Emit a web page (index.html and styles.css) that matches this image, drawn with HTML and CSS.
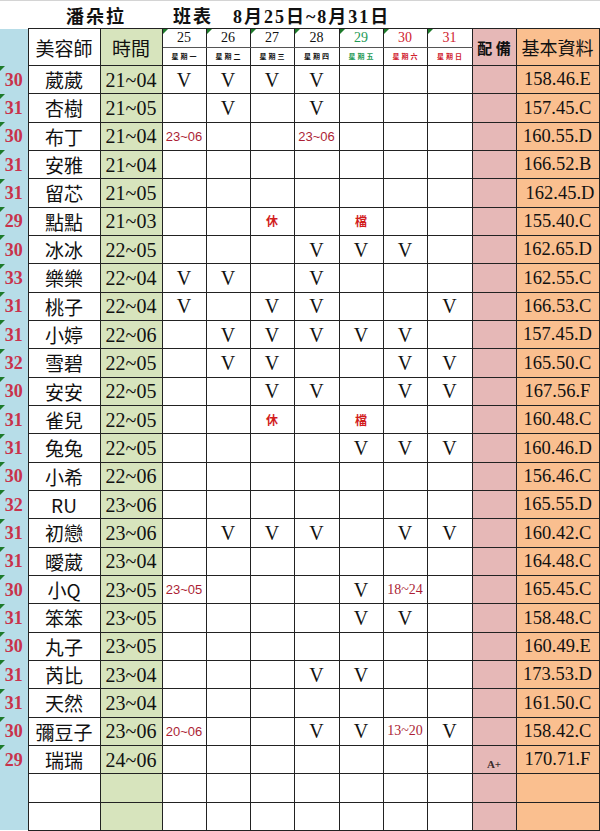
FILE: index.html
```html
<!DOCTYPE html>
<html lang="zh-Hant">
<head>
<meta charset="utf-8">
<title>潘朵拉 班表</title>
<link rel="stylesheet" href="styles.css">
</head>
<body>
<div class="title"><span class="t1">潘朵拉</span><span class="t2">班表</span><span class="t3">8月25日~8月31日</span></div>
<table class="sheet">
<colgroup>
<col class="w-num"><col class="w-name"><col class="w-time">
<col class="w-d44"><col class="w-d44"><col class="w-d44"><col class="w-d45"><col class="w-d44"><col class="w-d44"><col class="w-d45">
<col class="w-d44"><col class="w-info">
</colgroup>
<tr class="h1">
<th class="num" rowspan="2"></th>
<th class="name hd" rowspan="2">美容師</th>
<th class="time hd" rowspan="2">時間</th>
<th class="date mark">25</th><th class="date mark">26</th><th class="date mark">27</th><th class="date mark">28</th>
<th class="date mark green">29</th><th class="date mark red">30</th><th class="date mark red">31</th>
<th class="gear hdg" rowspan="2">配 備</th>
<th class="info hd" rowspan="2">基本資料</th>
</tr>
<tr class="h2">
<th class="wk">星期一</th><th class="wk">星期二</th><th class="wk">星期三</th><th class="wk">星期四</th>
<th class="wk green">星期五</th><th class="wk red">星期六</th><th class="wk red">星期日</th>
</tr>
<tr><td class="num mark">30</td><td class="name">葳葳</td><td class="time">21~04</td><td>V</td><td>V</td><td>V</td><td>V</td><td></td><td></td><td></td><td class="gear"></td><td class="info">158.46.E</td></tr>
<tr><td class="num mark">31</td><td class="name">杏樹</td><td class="time">21~05</td><td></td><td>V</td><td></td><td>V</td><td></td><td></td><td></td><td class="gear"></td><td class="info">157.45.C</td></tr>
<tr><td class="num mark">30</td><td class="name">布丁</td><td class="time">21~04</td><td class="r">23~06</td><td></td><td></td><td class="r">23~06</td><td></td><td></td><td></td><td class="gear"></td><td class="info">160.55.D</td></tr>
<tr><td class="num mark">31</td><td class="name">安雅</td><td class="time">21~04</td><td></td><td></td><td></td><td></td><td></td><td></td><td></td><td class="gear"></td><td class="info">166.52.B</td></tr>
<tr><td class="num mark">31</td><td class="name">留芯</td><td class="time">21~05</td><td></td><td></td><td></td><td></td><td></td><td></td><td></td><td class="gear"></td><td class="info shift">162.45.D</td></tr>
<tr><td class="num mark">29</td><td class="name">點點</td><td class="time">21~03</td><td></td><td></td><td class="off">休</td><td></td><td class="off">檔</td><td></td><td></td><td class="gear"></td><td class="info">155.40.C</td></tr>
<tr><td class="num mark">30</td><td class="name">冰冰</td><td class="time">22~05</td><td></td><td></td><td></td><td>V</td><td>V</td><td>V</td><td></td><td class="gear"></td><td class="info">162.65.D</td></tr>
<tr><td class="num mark">33</td><td class="name">樂樂</td><td class="time">22~04</td><td>V</td><td>V</td><td></td><td>V</td><td></td><td></td><td></td><td class="gear"></td><td class="info">162.55.C</td></tr>
<tr><td class="num mark">31</td><td class="name">桃子</td><td class="time">22~04</td><td>V</td><td></td><td>V</td><td>V</td><td></td><td></td><td>V</td><td class="gear"></td><td class="info">166.53.C</td></tr>
<tr><td class="num mark">31</td><td class="name">小婷</td><td class="time">22~06</td><td></td><td>V</td><td>V</td><td>V</td><td>V</td><td>V</td><td></td><td class="gear"></td><td class="info">157.45.D</td></tr>
<tr><td class="num mark">32</td><td class="name">雪碧</td><td class="time">22~05</td><td></td><td>V</td><td>V</td><td></td><td></td><td>V</td><td>V</td><td class="gear"></td><td class="info">165.50.C</td></tr>
<tr><td class="num mark">30</td><td class="name">安安</td><td class="time">22~05</td><td></td><td></td><td>V</td><td>V</td><td></td><td>V</td><td>V</td><td class="gear"></td><td class="info">167.56.F</td></tr>
<tr><td class="num mark">31</td><td class="name">雀兒</td><td class="time">22~05</td><td></td><td></td><td class="off">休</td><td></td><td class="off">檔</td><td></td><td></td><td class="gear"></td><td class="info">160.48.C</td></tr>
<tr><td class="num mark">31</td><td class="name">兔兔</td><td class="time">22~05</td><td></td><td></td><td></td><td></td><td>V</td><td>V</td><td>V</td><td class="gear"></td><td class="info">160.46.D</td></tr>
<tr><td class="num mark">30</td><td class="name">小希</td><td class="time">22~06</td><td></td><td></td><td></td><td></td><td></td><td></td><td></td><td class="gear"></td><td class="info">156.46.C</td></tr>
<tr><td class="num mark">32</td><td class="name">RU</td><td class="time">23~06</td><td></td><td></td><td></td><td></td><td></td><td></td><td></td><td class="gear"></td><td class="info">165.55.D</td></tr>
<tr><td class="num mark">31</td><td class="name">初戀</td><td class="time">23~06</td><td></td><td>V</td><td>V</td><td>V</td><td></td><td>V</td><td>V</td><td class="gear"></td><td class="info">160.42.C</td></tr>
<tr><td class="num mark">31</td><td class="name">曖葳</td><td class="time">23~04</td><td></td><td></td><td></td><td></td><td></td><td></td><td></td><td class="gear"></td><td class="info">164.48.C</td></tr>
<tr><td class="num mark">30</td><td class="name">小Q</td><td class="time">23~05</td><td class="r">23~05</td><td></td><td></td><td></td><td>V</td><td class="r serif">18~24</td><td></td><td class="gear"></td><td class="info">165.45.C</td></tr>
<tr><td class="num mark">31</td><td class="name">笨笨</td><td class="time">23~05</td><td></td><td></td><td></td><td></td><td>V</td><td>V</td><td></td><td class="gear"></td><td class="info">158.48.C</td></tr>
<tr><td class="num mark">30</td><td class="name">丸子</td><td class="time">23~05</td><td></td><td></td><td></td><td></td><td></td><td></td><td></td><td class="gear"></td><td class="info">160.49.E</td></tr>
<tr><td class="num mark">31</td><td class="name">芮比</td><td class="time">23~04</td><td></td><td></td><td></td><td>V</td><td>V</td><td></td><td></td><td class="gear"></td><td class="info">173.53.D</td></tr>
<tr><td class="num mark">31</td><td class="name">天然</td><td class="time">23~04</td><td></td><td></td><td></td><td></td><td></td><td></td><td></td><td class="gear"></td><td class="info">161.50.C</td></tr>
<tr><td class="num mark">30</td><td class="name">彌豆子</td><td class="time">23~06</td><td class="r">20~06</td><td></td><td></td><td>V</td><td>V</td><td class="r serif">13~20</td><td>V</td><td class="gear"></td><td class="info">158.42.C</td></tr>
<tr><td class="num mark">29</td><td class="name">瑞瑞</td><td class="time">24~06</td><td></td><td></td><td></td><td></td><td></td><td></td><td></td><td class="gear ap">A+</td><td class="info">170.71.F</td></tr>
<tr><td class="num"></td><td class="name"></td><td class="time"></td><td></td><td></td><td></td><td></td><td></td><td></td><td></td><td class="gear"></td><td class="info"></td></tr>
<tr><td class="num"></td><td class="name"></td><td class="time"></td><td></td><td></td><td></td><td></td><td></td><td></td><td></td><td class="gear"></td><td class="info"></td></tr>
</table>
</body>
</html>
```
FILE: styles.css
```css
html, body {
  margin: 0;
  padding: 0;
  background: #fff;
}

body {
  font-family: "Liberation Serif", "Noto Sans CJK TC", serif;
  color: #111;
}

.title {
  box-sizing: border-box;
  height: 28px;
  border-top: 1px solid #d4d4d4;
  display: flex;
  align-items: center;
  padding-left: 66px;
  font-family: "Liberation Serif", "Noto Sans CJK TC", serif;
  font-weight: 700;
  font-size: 18px;
  letter-spacing: 2px;
}

.title .t1 { width: 107px; }
.title .t2 { width: 60px; }

.sheet {
  border-collapse: collapse;
  table-layout: fixed;
  width: 599px;
}

.w-num { width: 28px; }
.w-name { width: 72px; }
.w-time { width: 62px; }
.w-d44 { width: 44px; }
.w-d45 { width: 45px; }
.w-info { width: 83px; }

.sheet td, .sheet th {
  border: 1px solid #222;
  padding: 0;
  text-align: center;
  vertical-align: middle;
  font-weight: normal;
  white-space: nowrap;
  overflow: hidden;
  position: relative;
  font-size: 20px;
  line-height: 1;
}

.sheet tr { height: 28.33px; }
.sheet tr.h1 { height: 19px; }
.sheet tr.h2 { height: 18px; }

.sheet .num {
  background: #b7dde8;
  color: #c8334b;
  font-weight: 700;
  font-size: 18px;
  border-top: none;
  border-bottom: none;
  border-left: none;
}

.sheet .name {
  font-family: "Noto Sans CJK TC", sans-serif;
  font-size: 19px;
}

.sheet .name.hd,
.sheet .time.hd,
.sheet .info.hd {
  font-family: "Noto Sans CJK TC", sans-serif;
  font-size: 19px;
}

.sheet .info.hd { font-size: 18px; }

.sheet .time {
  background: #d7e4bd;
}

.sheet .gear {
  background: #e6b8b7;
}

.sheet .info {
  background: #fabf8f;
  font-size: 18.5px;
}

.sheet .info.shift { padding-left: 5px; }

.sheet .hdg {
  font-family: "Noto Sans CJK TC", sans-serif;
  font-weight: 700;
  font-size: 15px;
}

.sheet .date {
  font-size: 14px;
  border-bottom: 1px solid #555;
}

.sheet .wk {
  font-family: "Noto Sans CJK TC", sans-serif;
  font-size: 7px;
  font-weight: 700;
  letter-spacing: 2px;
  padding-left: 2px;
}

.sheet .green { color: #1e9a56; }
.sheet .red { color: #d0222f; }

.sheet .r {
  font-family: "Liberation Sans", Arial, sans-serif;
  font-size: 13px;
  color: #ac1f36;
}

.sheet .r.serif {
  font-family: "Liberation Serif", serif;
  font-size: 14px;
}

.sheet .off {
  font-family: "Noto Sans CJK TC", sans-serif;
  font-weight: 700;
  font-size: 12px;
  color: #d21d1d;
}

.sheet .ap {
  font-size: 11px;
  font-weight: 700;
  vertical-align: bottom;
  padding-bottom: 3px;
  color: #3a2a2a;
}

.sheet .mark::before {
  content: "";
  position: absolute;
  left: 0;
  top: 0;
  border-top: 5px solid #1d7a2a;
  border-right: 5px solid transparent;
}
```
